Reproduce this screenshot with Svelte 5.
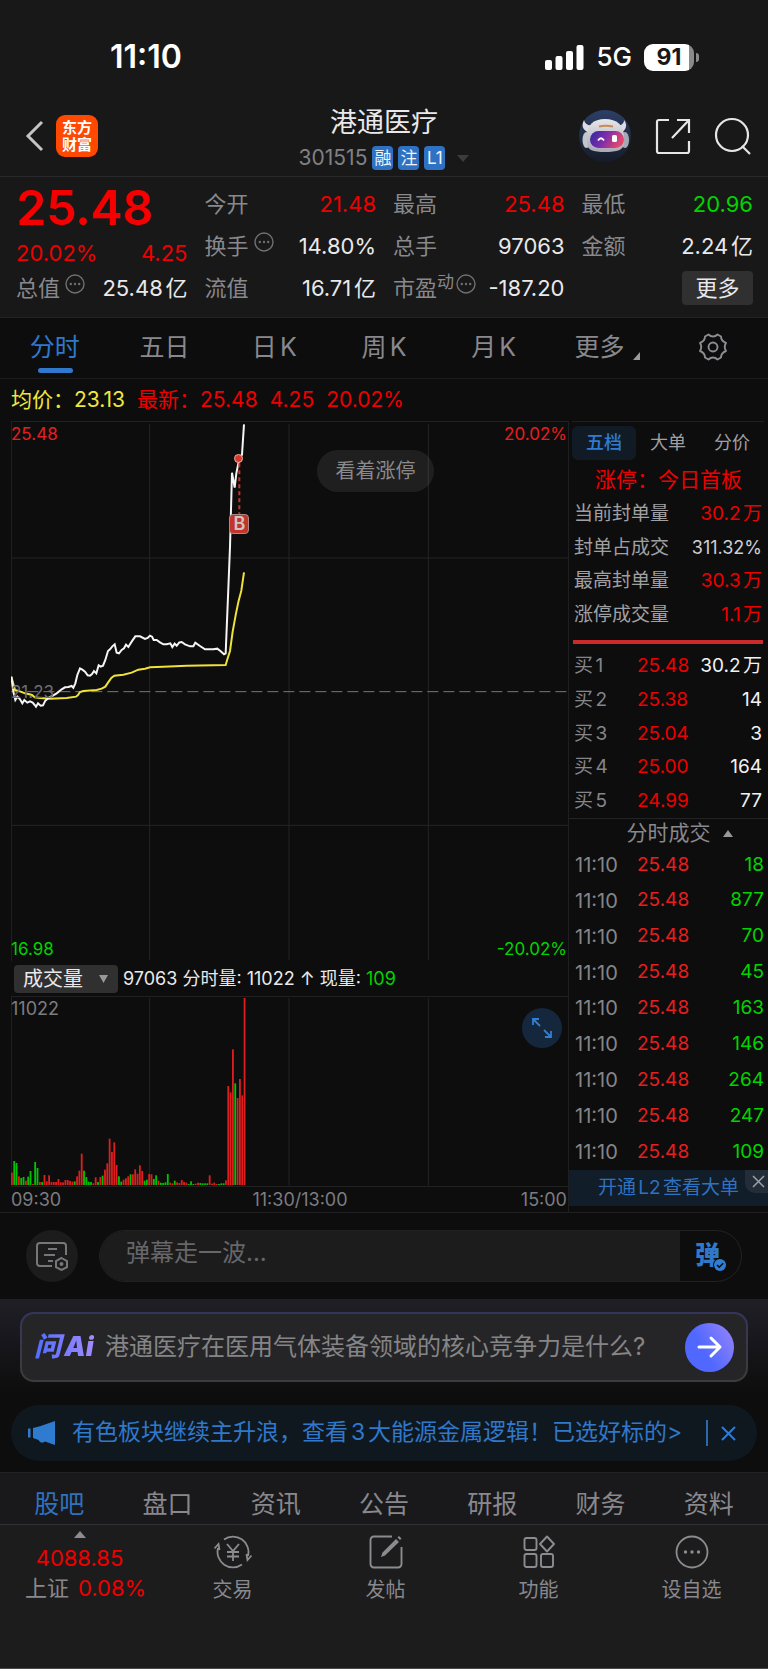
<script>
  const quoteColumns = [
    [
      { label: '今开', value: '21.48', tone: 'red' },
      { label: '换手', info: true, value: '14.80%' },
      { label: '流值', value: '16.71亿' }
    ],
    [
      { label: '最高', value: '25.48', tone: 'red' },
      { label: '总手', value: '97063' },
      { label: '市盈', sup: '动', info: true, value: '-187.20' }
    ]
  ];

  const periods = ['分时', '五日', '日K', '周K', '月K'];

  const sealRows = [
    { label: '当前封单量', value: '30.2万', tone: 'red' },
    { label: '封单占成交', value: '311.32%', tone: 'pale' },
    { label: '最高封单量', value: '30.3万', tone: 'red' },
    { label: '涨停成交量', value: '1.1万', tone: 'red' }
  ];

  const bids = [
    ['买1', '25.48', '30.2万'],
    ['买2', '25.38', '14'],
    ['买3', '25.04', '3'],
    ['买4', '25.00', '164'],
    ['买5', '24.99', '77']
  ];

  const trades = [18, 877, 70, 45, 163, 146, 264, 247, 109];

  // One entry per minute: height, with the direction letter (r = up, g = down).
  const volume = (
    '37r 72g 66g 26r 21g 24g 13r 25g 42g 3r 69g 51g 9r 9g 30r 11r 29r 9r 9r 9r ' +
    '18r 8r 8r 15r 15r 12r 10r 11g 26r 43r 94r 43g 24g 10g 9g 5r 23r 9g 24r 28g ' +
    '46r 65r 139r 99r 128r 60r 26g 10g 16r 20r 26r 32g 32r 47r 34r 59r 42r 13g 16g 33r ' +
    '32r 18g 29g 13r 7g 6g 8g 33g 7r 5r 13g 8r 6r 15r 9r 7r 3g 11g 3g 4r ' +
    '7r 6g 5g 5g 5g 29r 4r 7r 3r 3g 5g 5g 14r 297r 278r 407r 305g 261r 318r 269r 561r'
  )
    .split(' ')
    .map((item, i) => ({
      x: 33 + i * 6.98,
      h: parseInt(item),
      up: item.endsWith('r')
    }));

  const priceLine =
    '34,800 40,845 46,870 52,860 60,868 67,880 73,870 82,878 90,874 98,878 104,885 108,890 114,880 122,887 129,886 136,872 148,862 160,856 170,850 185,838 195,832 205,831 215,828 220,833 226,820 232,795 240,775 247,779 255,785 263,796 270,797 276,792 282,783 289,790 296,766 302,770 309,767 316,750 324,723 330,718 337,709 344,703 350,728 357,730 365,720 372,715 378,704 385,711 395,695 406,679 420,679 435,687 443,684 450,677 456,680 461,690 470,690 480,697 490,703 500,703 511,700 517,711 524,701 530,707 538,697 545,696 555,703 570,709 580,709 586,698 600,708 615,718 640,718 652,716 662,724 672,733 677,730 684,560 690,410 696,188 704,233 709,190 718,146 726,134 732,43';
  const averageLine =
    '34,800 40,822 45,840 60,844 75,850 88,853 96,855 104,862 120,864 150,866 200,864 228,860 234,855 240,846 250,843 290,840 305,836 316,830 324,818 334,804 343,797 370,794 395,788 415,779 435,776 450,772 490,770 560,767 677,765 683,745 690,723 698,665 708,610 716,572 724,542 732,487';

  const sections = ['股吧', '盘口', '资讯', '公告', '研报', '财务', '资料'];
</script>

{#snippet infoDot()}
  <svg class="info" viewBox="0 0 20 20" aria-hidden="true">
    <circle cx="10" cy="10" r="9" fill="none" stroke="currentColor" stroke-width="1.4" />
    <circle cx="5.8" cy="10" r="1.2" /><circle cx="10" cy="10" r="1.2" /><circle cx="14.2" cy="10" r="1.2" />
  </svg>
{/snippet}

<div class="app">
  <div class="status">
    <time class="clock">11:10</time>
    <div class="signals">
      <svg width="39" height="25" viewBox="0 0 39 25" aria-hidden="true" fill="#fff">
        <rect x="0" y="15" width="7" height="10" rx="2" />
        <rect x="10.5" y="11" width="7" height="14" rx="2" />
        <rect x="21" y="6" width="7" height="19" rx="2" />
        <rect x="31.5" y="0" width="7" height="25" rx="2" />
      </svg>
      <span class="network">5G</span>
      <span class="battery"><b>91</b></span>
    </div>
  </div>

  <header class="header">
    <div class="side left">
      <button class="icon-btn" aria-label="返回">
        <svg width="20" height="32" viewBox="0 0 20 32" fill="none" stroke="#c4c4c6" stroke-width="3"><path d="M17 2 3 16l14 14" /></svg>
      </button>
      <a class="brand" href="#home"><span>东方</span><span>财富</span></a>
    </div>
    <div class="name">
      <h1>港通医疗</h1>
      <div class="code">
        <span>301515</span>
        <i>融</i><i>注</i><i>L1</i>
        <svg class="code-caret" width="12" height="7" viewBox="0 0 12 7" aria-hidden="true"><path d="M0 0h12L6 7z" fill="#3b3b3c" /></svg>
      </div>
    </div>
    <div class="side right">
      <button class="icon-btn" aria-label="智能助手">
        <svg width="54" height="54" viewBox="0 0 54 54">
          <defs>
            <linearGradient id="sky" x1="0" y1="0" x2="0" y2="1"><stop offset="0" stop-color="#2c3f66" /><stop offset="1" stop-color="#161b28" /></linearGradient>
            <linearGradient id="visor" x1="0" y1="0" x2="1" y2="0.3"><stop offset="0" stop-color="#2d2a9c" /><stop offset="0.5" stop-color="#7b2cae" /><stop offset="1" stop-color="#e0476e" /></linearGradient>
            <linearGradient id="shell" x1="0" y1="0" x2="0" y2="1"><stop offset="0" stop-color="#e6e5e9" /><stop offset="1" stop-color="#aaa9b4" /></linearGradient>
          </defs>
          <circle cx="27" cy="27" r="26" fill="url(#sky)" />
          <path d="M6 11c-3 6-1 10 5 13l4-8c-5 1-8-1-9-5zM46 11c4 5 2 10-3 13l-5-8c5 1 8-1 8-5z" fill="#dcdce2" />
          <ellipse cx="8.500" cy="31" rx="4" ry="8" fill="#c4c4cd" />
          <ellipse cx="47" cy="31" rx="4" ry="8" fill="#a9a9b5" />
          <path d="M9 28c0-12 6-18 18-18s19 6 19 18v6c0 7-7 9-19 9S9 41 9 34z" fill="url(#shell)" />
          <path d="M21 17.500q7-1.500 14 0" stroke="#c98a55" stroke-width="2" fill="none" />
          <rect x="12" y="22" width="34" height="17" rx="8.500" fill="url(#visor)" />
          <path d="M20 31.500q3-4.500 6 0" stroke="#fff" stroke-width="1.800" fill="none" />
          <rect x="34" y="26" width="5" height="7" rx="1.500" fill="#fff" />
        </svg>
      </button>
      <button class="icon-btn" aria-label="分享">
        <svg width="36" height="37" viewBox="0 0 36 37" fill="none" stroke="#e6e6e8" stroke-width="2.2">
          <path d="M14 2H4a2 2 0 0 0-2 2v29a2 2 0 0 0 2 2h28a2 2 0 0 0 2-2V23M22 2h12v13M34 2 17 20" />
        </svg>
      </button>
      <button class="icon-btn" aria-label="搜索">
        <svg width="38" height="38" viewBox="0 0 38 38" fill="none" stroke="#e6e6e8" stroke-width="2.2"><circle cx="18" cy="18" r="16" /><path d="m28 29 8 8" /></svg>
      </button>
    </div>
  </header>

  <section class="quote">
    <div class="col">
      <strong class="price">25.48</strong>
      <div class="cell red change"><span>20.02%</span><span>4.25</span></div>
      <div class="cell"><span class="label">总值{@render infoDot()}</span><span>25.48亿</span></div>
    </div>
    {#each quoteColumns as column}
      <div class="col">
        {#each column as item}
          <div class="cell">
            <span class="label">{item.label}{#if item.sup}<sup>{item.sup}</sup>{/if}{#if item.info}{@render infoDot()}{/if}</span>
            <span class={item.tone}>{item.value}</span>
          </div>
        {/each}
      </div>
    {/each}
    <div class="col">
      <div class="cell"><span class="label">最低</span><span class="green">20.96</span></div>
      <div class="cell"><span class="label">金额</span><span>2.24亿</span></div>
      <div class="cell end"><button class="more">更多</button></div>
    </div>
  </section>

  <nav class="periods">
    {#each periods as period, i}
      <button class:active={i === 0}>{period}</button>
    {/each}
    <button class="menu">更多<svg width="7" height="8" viewBox="0 0 7 8" aria-hidden="true"><path d="M7 0v8H0z" fill="#9a9a9f" /></svg></button>
    <button aria-label="设置">
      <svg width="30" height="28" viewBox="0 0 30 28" fill="none" stroke="#8c8c91" stroke-width="1.900" stroke-linejoin="round">
        <path d="M10.500 1.500Q12.500 3.500 15 3.500T19.500 1.500L23 3.500Q23 8 28 10Q25.500 14 28 18Q23 20 23 24.500L19.500 26.500Q17.500 24.500 15 24.500T10.500 26.500L7 24.500Q7 20 2 18Q4.500 14 2 10Q7 8 7 3.500Z" />
        <circle cx="15" cy="14" r="4.500" />
      </svg>
    </button>
  </nav>

  <div class="summary">
    <span class="yellow">均价：</span><span class="yellow">23.13</span>
    <span class="red next">最新：</span><span class="red">25.48</span><span class="red next">4.25</span><span class="red next">20.02%</span>
  </div>

  <main class="board">
    <div class="charts">
      <div class="plot">
        <svg viewBox="33 33 1671 1623" preserveAspectRatio="none" aria-label="分时走势">
          <g class="grid">
            <path d="M34 34H1704M34 444H1704M34 1246H1704M34 34V1654M449 42V1650M867 42V1650M1285 42V1650" />
          </g>
          <path class="base" d="M34 845H1704" />
          <polyline class="avg" points={averageLine} />
          <polyline class="line" points={priceLine} />
          <path class="drop" d="M718 160V315" />
        </svg>
        <span class="tag top red">25.48</span>
        <span class="tag top end red">20.02%</span>
        <span class="tag mid">21.23</span>
        <span class="tag bottom green">16.98</span>
        <span class="tag bottom end green">-20.02%</span>
        <span class="dot"></span>
        <span class="buy">B</span>
        <button class="watch">看着涨停</button>
      </div>

      <div class="vol-head">
        <button class="indicator">成交量<svg width="9" height="8" viewBox="0 0 9 8" aria-hidden="true"><path d="M0 0h9L4.500 8z" fill="#98989c" /></svg></button>
        <span>97063 分时量: 11022 ↑ 现量: <span class="green">109</span></span>
      </div>

      <div class="plot vol">
        <svg viewBox="33 168 1671 573" preserveAspectRatio="none" aria-label="成交量">
          <g class="grid"><path d="M34 169H1704M34 740H1704M34 169V740M449 174V737M867 174V737M1285 174V737" /></g>
          {#each volume as bar}
            <rect x={bar.x} y={735 - bar.h} width="5.400" height={bar.h} fill={bar.up ? '#df1f1f' : '#00c400'} />
          {/each}
        </svg>
        <span class="tag top grey">11022</span>
        <button class="expand" aria-label="全屏">
          <svg width="22" height="22" viewBox="0 0 22 22" fill="none" stroke="#2f7fd6" stroke-width="1.800"><path d="M2 8V2h6M2 2l7 7M20 14v6h-6M20 20l-7-7" /></svg>
        </button>
      </div>
      <div class="axis"><span>09:30</span><span class="noon">11:30/13:00</span><span>15:00</span></div>
    </div>

    <aside class="book">
      <nav class="book-tabs"><button class="active">五档</button><button>大单</button><button>分价</button></nav>
      <h2>涨停：今日首板</h2>
      <table class="seal">
        <tbody>
          {#each sealRows as row}
            <tr><th>{row.label}</th><td class={row.tone}>{row.value}</td></tr>
          {/each}
        </tbody>
      </table>
      <hr />
      <table class="bids">
        <tbody>
          {#each bids as [level, price, size]}
            <tr><th>{level}</th><td class="red">{price}</td><td class="white">{size}</td></tr>
          {/each}
        </tbody>
      </table>
      <button class="ticks-head">分时成交<svg width="10" height="7" viewBox="0 0 10 7" aria-hidden="true"><path d="M5 0l5 7H0z" fill="#98989c" /></svg></button>
      <table class="ticks">
        <tbody>
          {#each trades as size}
            <tr><th>11:10</th><td class="bright">25.48</td><td class="green">{size}</td></tr>
          {/each}
        </tbody>
      </table>
      <div class="upgrade">
        <a href="#l2">开通L2查看大单</a>
        <button aria-label="关闭"><svg width="13" height="13" viewBox="0 0 13 13" fill="none" stroke="#9ba1a8" stroke-width="1.500"><path d="m1 1 11 11M12 1 1 12" /></svg></button>
      </div>
    </aside>
  </main>

  <div class="comment">
    <button class="round" aria-label="弹幕设置">
      <svg width="34" height="30" viewBox="0 0 34 30" fill="none" stroke="#77777a" stroke-width="2">
        <path d="M17 25H5a3 3 0 0 1-3-3V5a3 3 0 0 1 3-3h23a3 3 0 0 1 3 3v9M13 8h9M9 14h11M13 20h5" />
        <path d="m26.500 17 5.500 3.200v6L26.500 29 21 26.200v-6z" /><circle cx="26.500" cy="23" r="1" fill="#77777a" />
      </svg>
    </button>
    <div class="field">
      <input type="text" placeholder="弹幕走一波..." aria-label="弹幕" />
      <button class="bullet" aria-label="弹幕开关">
        <span>弹</span>
        <svg width="14" height="14" viewBox="0 0 14 14"><circle cx="7" cy="7" r="7" fill="#0d0d0d" /><circle cx="7" cy="7" r="6" fill="#2f7fd6" /><path d="m4 7 2.200 2.200 4-4" fill="none" stroke="#0d0d0d" stroke-width="1.600" /></svg>
      </button>
    </div>
  </div>

  <section class="ask">
    <div class="card">
      <span class="ai">问Ai</span>
      <span class="question">港通医疗在医用气体装备领域的核心竞争力是什么?</span>
      <button class="go" aria-label="提问">
        <svg width="26" height="24" viewBox="0 0 26 24" fill="none" stroke="#fff" stroke-width="3" stroke-linecap="round" stroke-linejoin="round"><path d="M2 12h21M14 3l9 9-9 9" /></svg>
      </button>
    </div>
  </section>

  <div class="notice">
    <svg width="27" height="24" viewBox="0 0 27 24" fill="#2f7bd0" aria-hidden="true"><path d="M0 7.500h2.500v9H0zM5 7l7-1.800V19.500l-7-2.500zM12 5.200 27 0v24l-10-3.400q-4 3-7-2z" /></svg>
    <a href="#news">有色板块继续主升浪，查看3大能源金属逻辑！已选好标的&gt;</a>
    <button aria-label="关闭"><svg width="15" height="15" viewBox="0 0 15 15" fill="none" stroke="#2f7bd0" stroke-width="2"><path d="m1 1 13 13M14 1 1 14" /></svg></button>
  </div>

  <nav class="sections">
    {#each sections as section, i}
      <button class:active={i === 0}>{section}</button>
    {/each}
  </nav>

  <footer class="dock">
    <a class="index" href="#index">
      <svg width="12" height="7" viewBox="0 0 12 7" aria-hidden="true"><path d="M6 0l6 7H0z" fill="#8c8c90" /></svg>
      <span class="red">4088.85</span>
      <span class="market">上证<span class="red">0.08%</span></span>
    </a>
    <button>
      <svg width="38" height="34" viewBox="0 0 38 34" fill="none" stroke="#8c8c90" stroke-width="1.800">
        <path d="M10 4.500A15.500 15.500 0 0 1 34 21M28 29.500A15.500 15.500 0 0 1 4 13M0.500 13.500 4.500 9l1 6M37.500 20.500 33.500 25l-1-6M13 9l6 7 6-7M19 16v10M13 17h12M13 21.500h12" />
      </svg>
      交易
    </button>
    <button>
      <svg width="34" height="34" viewBox="0 0 34 34" fill="none" stroke="#8c8c90" stroke-width="1.900"><path d="M23 1.500H5A3.500 3.500 0 0 0 1.500 5v24A3.500 3.500 0 0 0 5 32.500h24a3.500 3.500 0 0 0 3.500-3.500V12" /><path d="m12 22 1.500-4.500L27 4l3 3L16 20.500zM28.500 2.500l1.500-1.500 2.500 2.500L31 5z" fill="#8c8c90" stroke="none" /></svg>
      发帖
    </button>
    <button>
      <svg width="32" height="34" viewBox="0 0 32 34" fill="none" stroke="#8c8c90" stroke-width="1.900" stroke-linejoin="round"><rect x="1.500" y="3" width="12" height="12" rx="2" /><rect x="1.500" y="19" width="12" height="13" rx="2" /><rect x="18" y="19" width="12" height="13" rx="2" /><path d="m24 1.500 7 7.500-7 7.500L17 9z" /></svg>
      功能
    </button>
    <button>
      <svg width="34" height="34" viewBox="0 0 34 34" fill="none" stroke="#8c8c90" stroke-width="1.800"><circle cx="17" cy="17" r="15.500" /><g fill="#8c8c90" stroke="none"><circle cx="10.500" cy="17" r="1.700" /><circle cx="17" cy="17" r="1.700" /><circle cx="23.500" cy="17" r="1.700" /></g></svg>
      设自选
    </button>
  </footer>
</div>

<style>
  :global(body) { margin: 0; background: #0d0d0d; }
  .app {
    min-height: 100vh;
    box-sizing: border-box;
    display: flex;
    flex-direction: column;
    background: #0d0d0d;
    color: #e9e9eb;
    font-family: Inter, "Noto Sans CJK SC", sans-serif;
    font-size: 22px;
    line-height: 1.2;
    text-autospace: normal;
  }
  button { border: 0; padding: 0; margin: 0; background: none; color: inherit; font: inherit; cursor: pointer; }
  a { color: inherit; text-decoration: none; }
  svg { display: block; flex: none; }
  .red { color: #ec0000; }
  .green { color: #00d400; }
  .yellow { color: #f0e63c; }
  .white { color: #f2f2f4; }
  .pale { color: #cfcfd2; }
  .grey { color: #7c7c81; }
  .bright { color: #e81e1e; }

  .status { display: flex; justify-content: space-between; align-items: center; height: 54px; padding: 30px 74px 12px 110px; background: #181818; }
  .clock { font-size: 32px; font-weight: 600; color: #fff; }
  .signals { display: flex; align-items: center; gap: 12px; color: #fff; }
  .network { font-size: 26px; font-weight: 500; }
  .battery { position: relative; width: 50px; height: 27px; border-radius: 9px; background: linear-gradient(90deg, #fff 45px, #8a8a8a 45px); text-align: center; color: #181818; }
  .battery b { display: block; font-size: 23px; line-height: 27px; font-weight: 700; }
  .battery::after { content: ""; position: absolute; right: -5px; top: 9px; width: 3px; height: 9px; border-radius: 0 4px 4px 0; background: #8a8a8a; }

  .header { display: grid; grid-template-columns: 1fr auto 1fr; align-items: center; height: 80px; padding: 0 16px; background: #181818; border-bottom: 1px solid #29292b; }
  .side { display: flex; align-items: center; gap: 11px; }
  .left { padding-left: 9px; }
  .right { justify-content: flex-end; gap: 23px; }
  .brand { display: flex; flex-direction: column; justify-content: center; width: 42px; height: 42px; border-radius: 9px; background: #ff4800; color: #fff; font-size: 15px; line-height: 17px; font-weight: 700; text-align: center; }
  .name { display: flex; flex-direction: column; align-items: center; gap: 5px; padding-top: 3px; }
  h1 { margin: 0; font-size: 27px; line-height: 36px; font-weight: 400; }
  .code { display: flex; align-items: center; gap: 5px; line-height: 24px; font-size: 21px; color: #808085; }
  .code i { box-sizing: border-box; min-width: 21px; padding: 0 2px; border-radius: 4px; background: #2f72c4; color: #f0f4fa; font-style: normal; font-size: 17px; text-align: center; }
  .code-caret { margin-left: 7px; }

  .quote { display: grid; grid-template-columns: repeat(4, 1fr); gap: 17px; padding: 6px 15px 8px 16px; background: #181818; border-bottom: 1px solid #232325; }
  .col { display: flex; flex-direction: column; }
  .cell { display: flex; justify-content: space-between; align-items: center; height: 42px; font-size: 22px; white-space: nowrap; }
  .cell.change { height: 28px; }
  .cell.end { justify-content: flex-end; }
  .price { height: 56px; line-height: 50px; font-size: 48px; font-weight: 600; color: #f40000; }
  .label { display: flex; align-items: center; color: #88888d; }
  .label sup { font-size: 17px; line-height: 16px; align-self: flex-start; }
  .info { width: 20px; height: 20px; margin: 0 0 8px 5px; fill: currentColor; color: #6f6f73; }
  sup + .info { margin-left: 2px; }
  .more { width: 71px; height: 34px; border-radius: 4px; background: #303031; }

  .periods { display: grid; grid-template-columns: repeat(7, 1fr); height: 60px; color: #88888d; font-size: 25px; border-bottom: 1px solid #1c1c1e; }
  .periods button { position: relative; display: flex; align-items: center; justify-content: center; padding-bottom: 2px; }
  .periods .active { color: #2f78cc; }
  .periods .active::after { content: ""; position: absolute; left: 50%; bottom: 5px; width: 35px; height: 5px; margin-left: -17px; border-radius: 3px; background: #2f78cc; }
  .periods .menu { gap: 9px; padding-left: 8px; }
  .menu svg { align-self: flex-end; margin-bottom: 16px; }

  .summary { display: flex; align-items: center; height: 42px; padding: 0 11px; font-size: 21px; white-space: nowrap; }
  .summary .next { margin-left: 12px; }

  .board { display: flex; border-bottom: 1px solid #1f1f21; }
  .charts { flex: 1; min-width: 0; padding-left: 11px; display: flex; flex-direction: column; }
  .plot { position: relative; height: 541px; }
  .plot > svg { width: 100%; height: 100%; }
  .plot path, .plot polyline { vector-effect: non-scaling-stroke; fill: none; }
  .grid path { stroke: #252527; stroke-width: 1px; }
  .base { stroke: #77777c; stroke-width: 1px; stroke-dasharray: 11 5; }
  .avg { stroke: #efe23a; stroke-width: 2px; }
  .line { stroke: #f5f5f5; stroke-width: 2px; }
  .drop { stroke: #c2352b; stroke-width: 2px; stroke-dasharray: 4 3; }
  .tag { position: absolute; left: 0; font-size: 17px; line-height: 22px; }
  .tag.red { color: #e81e1e; }
  .tag.top { top: 2px; }
  .tag.bottom { bottom: 2px; }
  .tag.mid { top: 50%; margin-top: -11px; color: #6d6d72; }
  .tag.end { left: auto; right: 1px; }
  .tag.grey { font-size: 18px; }
  .dot { position: absolute; left: 41%; top: 7%; width: 7px; height: 7px; margin: -5px; border: 1px solid #e8b0aa; border-radius: 50%; background: #d8382c; }
  .buy { position: absolute; left: 41%; top: 19%; width: 18px; height: 18px; margin: -10px; border: 1px solid #a88a87; border-radius: 4px; background: #c2352b; color: #cfc3c2; font-size: 18px; line-height: 18px; font-weight: 600; text-align: center; }
  .watch { position: absolute; right: 134px; top: 29px; width: 117px; height: 42px; border-radius: 21px; background: rgba(255, 255, 255, 0.08); color: #8a8a8c; font-size: 20px; }
  .vol-head { display: flex; align-items: center; gap: 5px; height: 34px; padding-left: 3px; font-size: 18px; white-space: nowrap; }
  .indicator { display: flex; align-items: center; justify-content: space-between; width: 104px; height: 28px; padding: 0 10px 0 9px; border-radius: 4px; background: #303031; font-size: 20px; line-height: 28px; }
  .plot.vol { height: 191px; }
  .expand { position: absolute; right: 6px; top: 12px; width: 40px; height: 40px; border-radius: 50%; background: #14273c; display: grid; place-items: center; }
  .axis { display: flex; justify-content: space-between; padding-right: 1px; font-size: 18px; line-height: 25px; color: #7c7c81; }
  .noon { padding-left: 18px; }

  .book { flex: none; width: 200px; box-sizing: border-box; display: flex; flex-direction: column; border-left: 1px solid #1f1f21; }
  .book-tabs { display: flex; height: 34px; margin: 0 4px 0 3px; padding-top: 4px; border-top: 1px solid #1f1f21; font-size: 18px; color: #a0a0a3; }
  .book-tabs button { flex: 1; border-radius: 6px; }
  .book-tabs .active { background: #111b26; color: #2f7bd0; font-weight: 500; }
  h2 { margin: 0; padding-top: 2px; font-size: 21px; line-height: 36px; font-weight: 400; text-align: center; color: #ec0000; }
  table { border-collapse: collapse; width: 100%; font-size: 19px; white-space: nowrap; }
  th, td { padding: 0; font-weight: 400; text-align: left; }
  td:last-child { text-align: right; padding-right: 6px; }
  th { padding-left: 5px; color: #85858a; }
  .seal { height: 134px; }
  .seal th { color: #a0a0a3; }
  .seal .pale { font-size: 18px; }
  hr { height: 4px; margin: 8px 5px 6px 4px; border: 0; background: #c92a2a; }
  .bids { height: 168px; }
  .bids th { width: 63px; }
  .ticks-head { display: flex; align-items: center; justify-content: center; gap: 12px; height: 29px; padding-left: 22px; border-top: 1px solid #232325; font-size: 21px; line-height: 28px; color: #88888d; }
  .ticks { height: 323px; }
  .ticks th { width: 62px; padding-left: 6px; font-size: 20px; }
  .ticks td:last-child { padding-right: 4px; }
  .upgrade { position: relative; height: 36px; margin-bottom: 5px; background: #111d29; color: #2f72c0; font-size: 19px; line-height: 35px; text-align: center; }
  .upgrade button { position: absolute; right: 0; top: 0; width: 23px; height: 23px; padding-left: 7px; border-bottom-left-radius: 10px; background: #222d38; }

  .comment { display: flex; align-items: center; gap: 21px; padding: 17px 26px; }
  .round { width: 52px; height: 52px; border-radius: 50%; background: #1c1c1c; display: grid; place-items: center; }
  .field { flex: 1; display: flex; height: 50px; border: 1px solid #222223; border-radius: 27px; overflow: hidden; }
  input { flex: 1; min-width: 0; border: 0; padding: 0 0 5px 26px; background: #1c1c1c; color: #e9e9eb; font: inherit; font-size: 24px; outline: 0; }
  input::placeholder { color: #67676a; opacity: 1; }
  .bullet { position: relative; width: 61px; color: #2f78cc; font-size: 25px; font-weight: 900; line-height: 46px; padding: 0 6px 2px 0; }
  .bullet svg { position: absolute; left: 33px; bottom: 9px; }

  .ask { padding: 13px 20px 23px; background: linear-gradient(#201f27, #0d0d0d 90%); }
  .card { display: flex; align-items: center; height: 66px; padding: 0 12px; border: 2px solid transparent; border-radius: 14px; background: linear-gradient(#252527, #252527) padding-box, linear-gradient(#35355c, #3c3c3d) border-box; }
  .ai { width: 60px; font-size: 27px; font-weight: 900; font-style: italic; white-space: nowrap; background: linear-gradient(90deg, #4f6cff, #a18bff); background-clip: text; color: transparent; }
  .question { flex: 1; margin-left: 11px; font-size: 24px; color: #858588; white-space: nowrap; }
  .go { width: 49px; height: 49px; border-radius: 50%; background: linear-gradient(60deg, #5068ff 40%, #9a86fb); display: grid; place-items: center; }

  .notice { display: flex; align-items: center; height: 56px; margin: 0 11px 11px; padding: 0 21px 0 17px; border-radius: 28px; background: #10181f; color: #2f78cc; font-size: 23px; white-space: nowrap; }
  .notice a { flex: 1; margin-left: 17px; }
  .notice button { height: 26px; padding-left: 13px; border-left: 2px solid #2c68ae; }

  .sections { display: grid; grid-template-columns: repeat(7, 1fr); height: 51px; padding: 0 5px; border-top: 1px solid #232325; border-bottom: 1px solid #303032; background: #19191b; color: #88888d; font-size: 25px; }
  .sections button { padding-top: 10px; }
  .sections .active { color: #2f72c0; }

  .dock { flex: 1; display: grid; grid-template-columns: repeat(5, 1fr); align-items: start; min-height: 137px; padding: 6px 0 0 3px; background: #1c1c1d; border-bottom: 1px solid #4a4a4c; color: #88888d; font-size: 20px; }
  .dock button, .index { display: flex; flex-direction: column; align-items: center; line-height: 30px; }
  .dock button { gap: 6px; padding-top: 4px; }
  .index { font-size: 22px; white-space: nowrap; }
  .index svg { margin-bottom: 5px; }
  .market { display: flex; gap: 9px; padding-left: 12px; }
</style>
